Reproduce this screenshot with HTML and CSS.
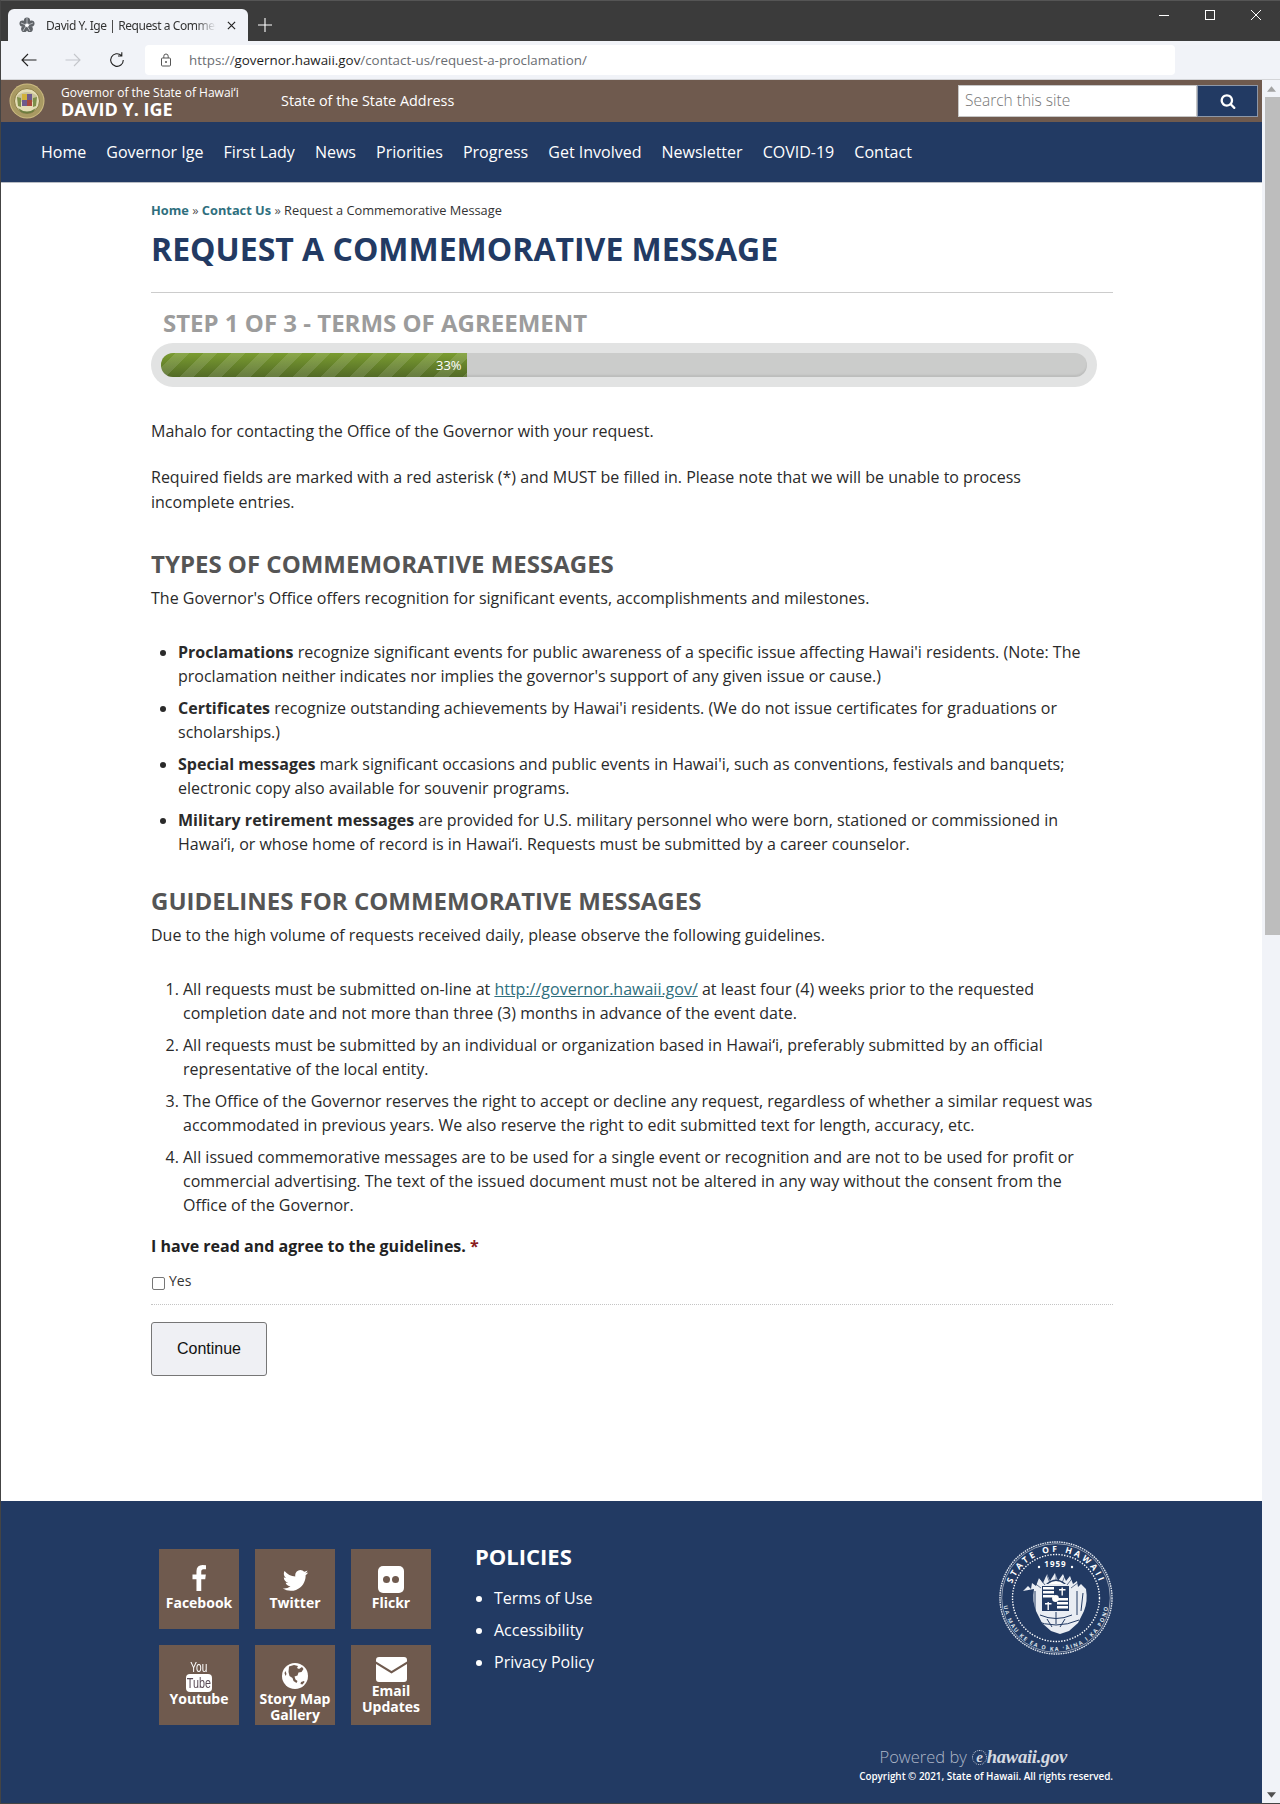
FILE: index.html
```html
<!DOCTYPE html>
<html lang="en">
<head>
<meta charset="utf-8">
<title>David Y. Ige | Request a Commemorative Message</title>
<link rel="stylesheet" href="styles.css">
</head>
<body>
<div class="window">
  <div class="tabstrip">
    <div class="tab">
      <svg class="favicon" viewBox="0 0 16 16"><g fill="#5f6368"><circle cx="8" cy="3.600" r="3.100"/><circle cx="12.400" cy="6.600" r="3.100"/><circle cx="10.800" cy="12" r="3.100"/><circle cx="5.200" cy="12" r="3.100"/><circle cx="3.600" cy="6.600" r="3.100"/></g><circle cx="8" cy="8" r="1.500" fill="#fff"/><path d="M8 1v5M14 6l-5 2M11 14l-3-5M4 14l3-5M2 6l5 2" stroke="#f1f3f8" stroke-width=".6"/></svg>
      <span class="tab-title">David Y. Ige | Request a Commen</span>
      <svg class="tab-close" viewBox="0 0 10 10"><path d="M1 1l8 8M9 1l-8 8" stroke="#222" stroke-width="1.300"/></svg>
    </div>
    <svg class="newtab" viewBox="0 0 14 14"><path d="M7 0v14M0 7h14" stroke="#fff" stroke-width="1.100"/></svg>
    <div class="winctl">
      <svg viewBox="0 0 12 12"><path d="M1 6.500h10" stroke="#fff"/></svg>
      <svg viewBox="0 0 12 12"><rect x="1.500" y="1.500" width="9" height="9" fill="none" stroke="#fff"/></svg>
      <svg viewBox="0 0 12 12"><path d="M1 1l10 10M11 1L1 11" stroke="#fff"/></svg>
    </div>
  </div>
  <div class="toolbar">
    <svg class="tbicon" viewBox="0 0 16 16"><path d="M15.500 8H.8M7 2L1 8l6 6" fill="none" stroke="#222" stroke-width="1.100"/></svg>
    <svg class="tbicon" viewBox="0 0 16 16"><path d="M.5 8h14.700M9 2l6 6-6 6" fill="none" stroke="#c4c6cb" stroke-width="1.100"/></svg>
    <svg class="tbicon" viewBox="0 0 16 16"><path d="M14.300 8a6.300 6.300 0 1 1-2-4.600M12.800 0.300v3.700H9" fill="none" stroke="#222" stroke-width="1.100"/></svg>
    <div class="omnibox">
      <svg class="lock" viewBox="0 0 12 14"><rect x="1.500" y="5" width="9" height="8" rx="1" fill="none" stroke="#555"/><path d="M3.800 5V3.200a2.200 2.200 0 0 1 4.400 0V5" fill="none" stroke="#555"/><circle cx="6" cy="9" r="1" fill="#555"/></svg>
      <span class="url"><span class="url-host">https://</span><span class="url-main">governor.hawaii.gov</span><span class="url-host">/contact-us/request-a-proclamation/</span></span>
    </div>
  </div>
  <div class="viewport">
    <div class="page">
      <header class="brandbar">
        <svg class="mini-seal" viewBox="0 0 36 36"><circle cx="18" cy="18" r="17.500" fill="#cdbb82"/><circle cx="18" cy="18" r="16.500" fill="#a99a63"/><circle cx="18" cy="18" r="12.500" fill="#e4ddb6" stroke="#8c7d45"/><path d="M8 13q10-8 20 0l-1 6H9z" fill="#c8c39a"/><rect x="13" y="11" width="10" height="12" fill="#6e5a8c"/><rect x="13" y="11" width="5" height="6" fill="#d1b23c"/><rect x="18" y="17" width="5" height="6" fill="#a8483c"/><path d="M8 14l4 1v9l-3-1zM28 14l-4 1v9l3-1z" fill="#7e8f4a"/><path d="M9 25q9 7 18 0l-3 4q-6 3-12 0z" fill="#6d7d40"/></svg>
        <div class="brand">
          <div class="brand-sub">Governor of the State of Hawaiʻi</div>
          <div class="brand-name">DAVID Y. IGE</div>
        </div>
        <a class="brand-link">State of the State Address</a>
        <div class="search">
          <div class="search-input">Search this site</div>
          <div class="search-btn"><svg viewBox="0 0 1792 1792"><path fill="#fff" d="M1216 832q0-185-131.500-316.500t-316.500-131.500-316.500 131.500-131.500 316.500 131.500 316.500 316.500 131.500 316.500-131.500 131.500-316.500zm512 832q0 52-38 90t-90 38q-54 0-90-38l-343-342q-179 124-399 124-143 0-273.500-55.500t-225-150-150-225-55.500-273.500 55.500-273.500 150-225 225-150 273.500-55.500 273.500 55.500 225 150 150 225 55.500 273.500q0 220-124 399l343 343q37 37 37 90z"/></svg></div>
        </div>
      </header>
      <nav class="mainnav">
        <a>Home</a><a>Governor Ige</a><a>First Lady</a><a>News</a><a>Priorities</a><a>Progress</a><a>Get Involved</a><a>Newsletter</a><a>COVID-19</a><a>Contact</a>
      </nav>
      <main class="content">
        <div class="crumbs"><a>Home</a> <span class="sep">»</span> <a>Contact Us</a> <span class="sep">»</span> Request a Commemorative Message</div>
        <h1>REQUEST A COMMEMORATIVE MESSAGE</h1>
        <div class="rule"></div>
        <h3 class="step">STEP 1 OF 3 - TERMS OF AGREEMENT</h3>
        <div class="progress"><div class="track"><div class="fill" style="width:33%"><span>33%</span></div></div></div>
        <p class="lead">Mahalo for contacting the Office of the Governor with your request.</p>
        <p class="lead">Required fields are marked with a red asterisk (*) and MUST be filled in. Please note that we will be unable to process incomplete entries.</p>
        <h2>TYPES OF COMMEMORATIVE MESSAGES</h2>
        <p class="intro">The Governor's Office offers recognition for significant events, accomplishments and milestones.</p>
        <ul class="types">
          <li><b>Proclamations</b> recognize significant events for public awareness of a specific issue affecting Hawai'i residents. (Note: The proclamation neither indicates nor implies the governor's support of any given issue or cause.)</li>
          <li><b>Certificates</b> recognize outstanding achievements by Hawai'i residents. (We do not issue certificates for graduations or scholarships.)</li>
          <li><b>Special messages</b> mark significant occasions and public events in Hawai'i, such as conventions, festivals and banquets; electronic copy also available for souvenir programs.</li>
          <li><b>Military retirement messages</b> are provided for U.S. military personnel who were born, stationed or commissioned in Hawaiʻi, or whose home of record is in Hawaiʻi. Requests must be submitted by a career counselor.</li>
        </ul>
        <h2>GUIDELINES FOR COMMEMORATIVE MESSAGES</h2>
        <p class="intro">Due to the high volume of requests received daily, please observe the following guidelines.</p>
        <ol class="rules">
          <li>All requests must be submitted on-line at <a>http://governor.hawaii.gov/</a> at least four (4) weeks prior to the requested completion date and not more than three (3) months in advance of the event date.</li>
          <li>All requests must be submitted by an individual or organization based in Hawaiʻi, preferably submitted by an official representative of the local entity.</li>
          <li>The Office of the Governor reserves the right to accept or decline any request, regardless of whether a similar request was accommodated in previous years. We also reserve the right to edit submitted text for length, accuracy, etc.</li>
          <li>All issued commemorative messages are to be used for a single event or recognition and are not to be used for profit or commercial advertising. The text of the issued document must not be altered in any way without the consent from the Office of the Governor.</li>
        </ol>
        <div class="field-label">I have read and agree to the guidelines. <span class="req">*</span></div>
        <label class="check"><span class="box"></span><span>Yes</span></label>
        <div class="dotted"></div>
        <button class="continue">Continue</button>
      </main>
      <footer class="footer">
        <div class="tiles">
          <a class="tile"><div class="ti"><svg viewBox="0 0 1792 1792" class="ic-f"><path fill="#fff" d="M1343 12v264h-157q-86 0-116 36t-30 108v189h293l-39 296h-254v759h-306v-759h-255v-296h255v-218q0-186 104-288.500t277-102.500q147 0 228 12z"/></svg></div><span>Facebook</span></a>
          <a class="tile"><div class="ti"><svg viewBox="0 250 1664 1300" class="ic-t"><path fill="#fff" d="M1620 408q-67 98-162 167 1 14 1 42 0 130-38 259.500t-115.500 248.500-184.500 210.500-258 146-323 54.500q-271 0-496-145 35 4 78 4 225 0 401-138-105-2-188-64.500t-114-159.500q33 5 61 5 43 0 85-11-112-23-185.500-111.500t-73.500-205.500v-4q68 38 146 41-66-44-105-115t-39-154q0-88 44-163 121 149 294.500 238.500t371.500 99.500q-8-38-8-74 0-134 94.500-228.500t228.500-94.500q140 0 236 102 109-21 205-78-37 115-142 178 92-10 184-50z"/></svg></div><span>Twitter</span></a>
          <a class="tile"><div class="ti"><svg viewBox="0 0 26 27" class="ic-fl"><rect width="26" height="27" rx="5" fill="#fff"/><circle cx="8.500" cy="13.500" r="3.500" fill="#6f5a4e"/><circle cx="17.500" cy="13.500" r="3.500" fill="#6f5a4e"/></svg></div><span>Flickr</span></a>
          <a class="tile"><div class="ti"><div class="yt"><span class="yt-you">You</span><span class="yt-tube"><span>Tube</span></span></div></div><span>Youtube</span></a>
          <a class="tile"><div class="ti"><svg viewBox="0 0 26 26" class="ic-g"><circle cx="13" cy="13" r="13" fill="#fff"/><path fill="#6f5a4e" d="M7 3.500l5-1.500 4 1-1 2 2 1 3-2 1.500 2-2 3-3 .500-1 3-3 1 1 3 2 1.500-1 2-3-2-1-3-3-2-1-4zM19 19l3-1 .500 1-2 2.500-2-.500zM2.500 10l1-2 1 3-1 2z"/></svg></div><span>Story Map Gallery</span></a>
          <a class="tile tile-tall"><div class="ti"><svg viewBox="0 0 31 25" class="ic-e"><path fill="#fff" d="M3 0h25a3 3 0 0 1 3 3v1.500L15.500 14 0 4.500V3a3 3 0 0 1 3-3zM0 7l15.500 9.500L31 7v15a3 3 0 0 1-3 3H3a3 3 0 0 1-3-3z"/></svg></div><span>Email Updates</span></a>
        </div>
        <div class="policies">
          <h4>POLICIES</h4>
          <ul>
            <li>Terms of Use</li>
            <li>Accessibility</li>
            <li>Privacy Policy</li>
          </ul>
        </div>
        <div class="footer-right">
          <svg class="seal" viewBox="0 0 114 114">
            <defs>
              <path id="seal-top" d="M11 57a46 46 0 0 1 92 0"/>
              <path id="seal-bot" d="M4.800 47.800A53 53 0 1 0 109.200 47.800"/>
            </defs>
            <circle cx="57" cy="57" r="56" fill="none" stroke="#dfe4ec" stroke-width="1.400" stroke-dasharray="1.600 .8"/>
            <circle cx="57" cy="57" r="54.300" fill="none" stroke="#fff" stroke-width=".5"/>
            <circle cx="57" cy="57" r="43.500" fill="none" stroke="#fff" stroke-width="1.400" stroke-dasharray="1.400 1.400"/>
            <text class="seal-text"><textPath href="#seal-top" startOffset="50%" text-anchor="middle" letter-spacing="2.800">STATE OF HAWAII</textPath></text>
            <text class="seal-year" x="56.500" y="26" text-anchor="middle">1959</text>
            <circle cx="40" cy="26" r="1.200" fill="#fff"/><circle cx="73" cy="26" r="1.200" fill="#fff"/>
            <text class="seal-motto"><textPath href="#seal-bot" startOffset="50%" text-anchor="middle" letter-spacing="1.500">UA MAU KE EA O KA ʻĀINA I KA PONO</textPath></text>
            <path fill="#e9edf3" d="M24 50l5-5 3 3 1-6 4 3 3-8 4 5 4-9 3 7 5-8 3 8 5-7 3 7 4-5 3 8 4-3 1 6 3-3 5 5q2 12-2 22l-6 12-9 8-9 3-9-3-9-8-6-12q-4-10-2-22z"/>
            <path stroke="#223a63" stroke-width=".7" fill="none" d="M57 42V30M51 42l-4-10M63 42l4-10M46 44l-7-9M68 44l7-9M42 47l-8-6M72 47l8-6"/>
            <path d="M47 43q10-9 20 0z" fill="#223a63"/>
            <path d="M49 43q8-6 16 0z" fill="#fff"/>
            <rect x="43" y="45" width="27" height="25" fill="#223a63"/>
            <path fill="#fff" d="M44 46h11v2.400H44zm0 4h11v2.400H44zm0 4h11v2.400H44zm14 7h11v2.400H58zm0 4h11v2.400H58zm0-8h11v2.400H58z"/>
            <path fill="#fff" d="M62.500 46.500h1.400v8h-1.400zM60 48h6.500v1.400H60zM48.500 61h1.400v8h-1.400zM46 62h6.500v1.400H46z"/>
            <circle cx="56.500" cy="57.500" r="3.400" fill="#fff"/>
            <path stroke="#223a63" stroke-width="1" fill="none" d="M30 52l2 18M36 50v24M78 50v24M84 52l-2 18M34 79q23 10 46 0M41 74q16 7 32 0M57 71v12M48 78l5 8M66 78l-5 8"/>
          </svg>
          <div class="powered">Powered by <span class="ehawaii"><span class="e-mark">e</span>hawaii.gov</span></div>
          <div class="copy">Copyright © 2021, State of Hawaii. All rights reserved.</div>
        </div>
      </footer>
    </div>
    <div class="scrollbar">
      <svg class="sb-arrow" viewBox="0 0 10 6"><path d="M5 0l5 6H0z" fill="#a3a3a3"/></svg>
      <div class="sb-thumb"></div>
      <div class="sb-space"></div>
      <svg class="sb-arrow" viewBox="0 0 10 6"><path d="M5 6L0 0h10z" fill="#505050"/></svg>
    </div>
  </div>
</div>
</body>
</html>
```
FILE: styles.css
```css
* { box-sizing: border-box; }
html, body { margin: 0; padding: 0; height: 100%; overflow: hidden; }
body { font-family: "Open Sans", "Noto Sans", sans-serif; font-size: 16px; color: #2a2a2a; background: #fff; }
.window { height: 1804px; display: flex; flex-direction: column; border: 1px solid #444; border-top-color: #555; border-right: 0; }

.tabstrip { height: 40px; background: #3b3b3b; display: flex; align-items: flex-end; padding-left: 7px; position: relative; flex: none; }
.tab { width: 240px; height: 32px; background: #f1f3f8; border-radius: 6px 6px 0 0; display: flex; align-items: center; padding: 0 12px 0 11px; gap: 11px; flex: none; }
.favicon { width: 16px; height: 16px; flex: none; }
.tab-title { font-family: "Noto Sans", sans-serif; font-size: 12px; color: #333; white-space: nowrap; flex: 1; min-width: 0; letter-spacing: -.43px; -webkit-mask-image: linear-gradient(90deg, #000 88%, transparent 100%); mask-image: linear-gradient(90deg, #000 88%, transparent 100%); }
.tab-close { width: 9px; height: 9px; flex: none; }
.newtab { width: 14px; height: 14px; margin: 0 0 9px 10px; }
.winctl { position: absolute; right: 0; top: 8px; display: flex; gap: 34px; padding-right: 18px; }
.winctl svg { width: 12px; height: 12px; display: block; }

.toolbar { height: 39px; background: #f1f3f8; border-bottom: 1px solid #d4d5d8; display: flex; align-items: center; padding: 0 0 0 20px; flex: none; gap: 28px; }
.tbicon { width: 16px; height: 16px; flex: none; }
.omnibox { width: 1030px; height: 30px; background: #fff; border-radius: 4px; margin-left: -8px; display: flex; align-items: center; padding-left: 15px; gap: 17px; }
.lock { width: 12px; height: 14px; }
.url { font-size: 13.370px; }
.url-host { color: #6a6d72; }
.url-main { color: #1d1d1d; }

.viewport { flex: 1; display: flex; min-height: 0; }
.page { flex: 1; min-width: 0; display: flex; flex-direction: column; }
.scrollbar { width: 18px; background: #f1f3f8; display: flex; flex-direction: column; align-items: center; padding: 6px 0 5px; flex: none; }
.sb-arrow { width: 9px; height: 6px; flex: none; }
.sb-thumb { width: 15px; height: 838px; background: #bdbdbd; margin-top: 5px; flex: none; align-self: flex-end; }
.sb-space { flex: 1; }

.brandbar { height: 42px; background: #6f5a4e; display: flex; align-items: center; padding-left: 8px; color: #fff; flex: none; }
.mini-seal { width: 36px; height: 36px; flex: none; }
.brand { margin-left: 16px; width: 220px; }
.brand-sub { font-size: 12px; line-height: 15px; margin-top: 1px; }
.brand-name { font-size: 18px; font-weight: 700; line-height: 19px; }
.brand-link { font-size: 14.400px; margin-top: -2px; }
.search { margin-left: auto; margin-right: 4px; display: flex; height: 32px; margin-top: -1px; }
.search-input { width: 239px; background: #fff; border: 1px solid #c6c6c6; color: #757575; font-size: 15.500px; line-height: 28px; padding-left: 6px; font-weight: 300; }
.search-btn { width: 61px; background: #223a63; border: 1px solid #8d97a8; display: flex; align-items: center; justify-content: center; }
.search-btn svg { width: 16px; height: 16px; }

.mainnav { height: 61px; background: #223a63; border-bottom: 1px solid #b9bdc4; display: flex; align-items: center; gap: 20.100px; padding: 0 0 0 40px; flex: none; }
.mainnav a { color: #fff; font-size: 16px; line-height: 22px; }

.content { flex: 1; padding: 18px 149px 0 150px; }
.crumbs { font-size: 12.800px; line-height: 18px; color: #333; }
.crumbs a { color: #2f6f7e; font-weight: 700; }
.crumbs .sep { color: #555; }
h1 { margin: 8px 0 0; font-size: 32px; line-height: 44px; font-weight: 700; color: #223a63; }
.rule { height: 1px; background: #ccc; margin-top: 21px; }
.step { margin: 14px 0 0 12px; font-size: 24px; line-height: 32px; font-weight: 700; color: #9c9c9c; }
.progress { width: 946px; height: 44px; border-radius: 22px; background: #e2e3e3; padding: 10px 10px; margin-top: 4px; }
.track { height: 24px; border-radius: 12px; background: #cbcccb; overflow: hidden; box-shadow: inset 0 -2px 2px rgba(0,0,0,.08); }
.fill { height: 100%; text-align: right; padding-right: 5px; background-image: repeating-linear-gradient(135deg, transparent 0 10px, rgba(255,255,255,.12) 10px 20px), linear-gradient(#7a9c30, #526a26); }
.fill span { display: block; color: #fff; font-size: 13px; line-height: 24px; }
p { margin: 0; }
.lead { font-size: 16px; line-height: 25px; margin-top: 21px; max-width: 946px; }
.progress + .lead { margin-top: 32px; }
h2 { margin: 32px 0 0; font-size: 24px; line-height: 33px; font-weight: 700; color: #555; }
.intro { line-height: 25px; margin-top: 6px; }
ul.types, ol.rules { margin: 29px 0 0; padding: 0; line-height: 24px; max-width: 946px; }
ul.types { padding-left: 27px; }
ol.rules { padding-left: 32px; margin-top: 29px; }
ul.types li, ol.rules li { margin-bottom: 8px; }
ul.types + h2 { margin-top: 28px; }
ol.rules a { color: #2f6f7e; text-decoration: underline; }
.field-label { font-weight: 700; font-size: 16px; line-height: 24px; margin-top: 17px; color: #222; }
.req { color: #8a1c1c; }
.check { display: flex; align-items: flex-start; font-size: 14px; line-height: 18px; margin-top: 14px; color: #333; gap: 4px; }
.box { width: 13px; height: 13px; border: 1px solid #767676; border-radius: 2px; background: #fff; margin: 5px 0 0 1px; }
.dotted { border-top: 1px dotted #c4c4c4; margin-top: 14px; }
.continue { display: block; width: 116px; height: 54px; margin-top: 17px; background: #eff0f4; border: 1px solid #767676; border-radius: 3px; font-family: "Liberation Sans", Arial, sans-serif; font-size: 16px; color: #111; }

.footer { height: 302px; background: #223a63; flex: none; display: flex; color: #fff; padding: 48px 149px 0 158px; }
.tiles { display: grid; grid-template-columns: repeat(3, 80px); grid-auto-rows: 80px; gap: 16px; align-content: start; }
.tile { background: #6f5a4e; display: flex; flex-direction: column; align-items: center; text-align: center; font-size: 14px; line-height: 16px; font-weight: 700; color: #fff; padding: 0 2px; overflow: hidden; }
.ti { height: 46px; flex: none; display: flex; align-items: flex-end; justify-content: center; }
.tile-tall .ti { height: 38px; }
.tile svg { display: block; flex: none; }
.ic-f { width: 28px; height: 28px; margin-bottom: 2px; }
.ic-t { width: 27px; height: 21px; margin-bottom: 4px; }
.ic-fl { width: 26px; height: 27px; margin-bottom: 2px; }
.ic-g { width: 26px; height: 26px; margin-bottom: 2px; }
.ic-e { width: 31px; height: 25px; margin-bottom: 1px; }
.yt { display: flex; flex-direction: column; align-items: center; margin-bottom: -1px; }
.yt-you { font-family: "Liberation Sans", sans-serif; font-size: 14px; line-height: 13px; font-weight: 400; transform: scaleX(.72); }
.yt-tube { font-family: "Liberation Sans", sans-serif; background: #fff; color: #5a4a56; border-radius: 4px; font-size: 15px; line-height: 18px; font-weight: 400; width: 26px; display: flex; justify-content: center; }
.yt-tube span { display: block; transform: scaleX(.72); }
.policies { margin-left: 44px; }
.policies h4 { margin: -8px 0 0; font-size: 22px; line-height: 30px; font-weight: 700; }
.policies ul { margin: 11px 0 0; padding-left: 19px; line-height: 32px; font-size: 16px; }
.footer-right { margin-left: auto; display: flex; flex-direction: column; align-items: flex-end; }
.seal { width: 114px; height: 114px; margin-top: -8px; }
.seal-text { font: 700 8.500px "Open Sans", sans-serif; fill: #fff; }
.seal-year { font: 700 8px "Open Sans", sans-serif; fill: #fff; letter-spacing: 1px; }
.seal-motto { font: 700 5.500px "Open Sans", sans-serif; fill: #dfe4ec; }
.powered { margin-top: 91px; margin-right: 46px; font-size: 16.500px; line-height: 22px; font-weight: 300; color: #aeb7c8; display: flex; align-items: center; gap: 5px; }
.ehawaii { font-family: "Liberation Serif", serif; font-weight: 700; font-style: italic; font-size: 18.600px; letter-spacing: -.3px; color: #d5d9e0; display: inline-flex; align-items: center; }
.e-mark { display: inline-block; width: 15px; height: 15px; line-height: 13px; text-align: center; border: 1.500px dotted #c8cedb; border-radius: 50%; font-size: 15px; }
.copy { font-size: 9.900px; line-height: 16px; font-weight: 600; margin-top: 0; }
```
